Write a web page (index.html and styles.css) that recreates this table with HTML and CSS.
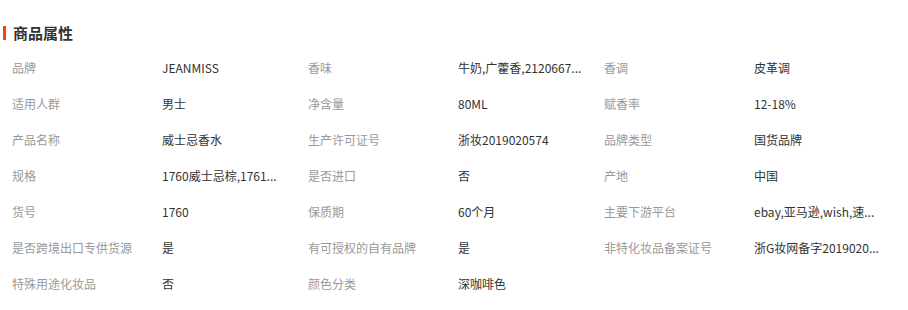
FILE: index.html
```html
<!DOCTYPE html>
<html lang="zh-CN">
<head>
<meta charset="utf-8">
<title>商品属性</title>
<link rel="stylesheet" href="styles.css">
</head>
<body>
<div class="panel">
  <h2 class="title">商品属性</h2>
  <div class="attrs">
    <div class="label">品牌</div><div class="value">JEANMISS</div>
    <div class="label">香味</div><div class="value">牛奶,广藿香,2120667...</div>
    <div class="label">香调</div><div class="value">皮革调</div>

    <div class="label">适用人群</div><div class="value">男士</div>
    <div class="label">净含量</div><div class="value">80ML</div>
    <div class="label">赋香率</div><div class="value">12-18%</div>

    <div class="label">产品名称</div><div class="value">威士忌香水</div>
    <div class="label">生产许可证号</div><div class="value">浙妆2019020574</div>
    <div class="label">品牌类型</div><div class="value">国货品牌</div>

    <div class="label">规格</div><div class="value">1760威士忌棕,1761...</div>
    <div class="label">是否进口</div><div class="value">否</div>
    <div class="label">产地</div><div class="value">中国</div>

    <div class="label">货号</div><div class="value">1760</div>
    <div class="label">保质期</div><div class="value">60个月</div>
    <div class="label">主要下游平台</div><div class="value">ebay,亚马逊,wish,速...</div>

    <div class="label">是否跨境出口专供货源</div><div class="value">是</div>
    <div class="label">有可授权的自有品牌</div><div class="value">是</div>
    <div class="label">非特化妆品备案证号</div><div class="value">浙G妆网备字2019020...</div>

    <div class="label">特殊用途化妆品</div><div class="value">否</div>
    <div class="label">颜色分类</div><div class="value">深咖啡色</div>
  </div>
</div>
</body>
</html>
```
FILE: styles.css
```css
html, body {
  margin: 0;
  padding: 0;
  background: #fff;
}
body {
  font-family: "Noto Sans CJK SC", "Noto Sans", sans-serif;
  font-size: 12px;
  color: #333;
}
.panel {
  padding-top: 23px;
}
.title {
  display: flex;
  align-items: center;
  gap: 7px;
  margin: 0;
  padding-left: 3px;
  height: 20px;
  line-height: 20px;
  font-size: 15px;
  font-weight: bold;
  color: #333;
}
.title::before {
  content: "";
  display: block;
  width: 3px;
  height: 14px;
  background: #ff4400;
}
.attrs {
  display: grid;
  grid-template-columns: 150px 146px 150px 146px 150px 146px;
  padding-left: 12px;
  margin-top: 7px;
}
.label,
.value {
  height: 36px;
  line-height: 36px;
  white-space: nowrap;
}
.label {
  color: #999;
}
.value {
  color: #333;
}
```
